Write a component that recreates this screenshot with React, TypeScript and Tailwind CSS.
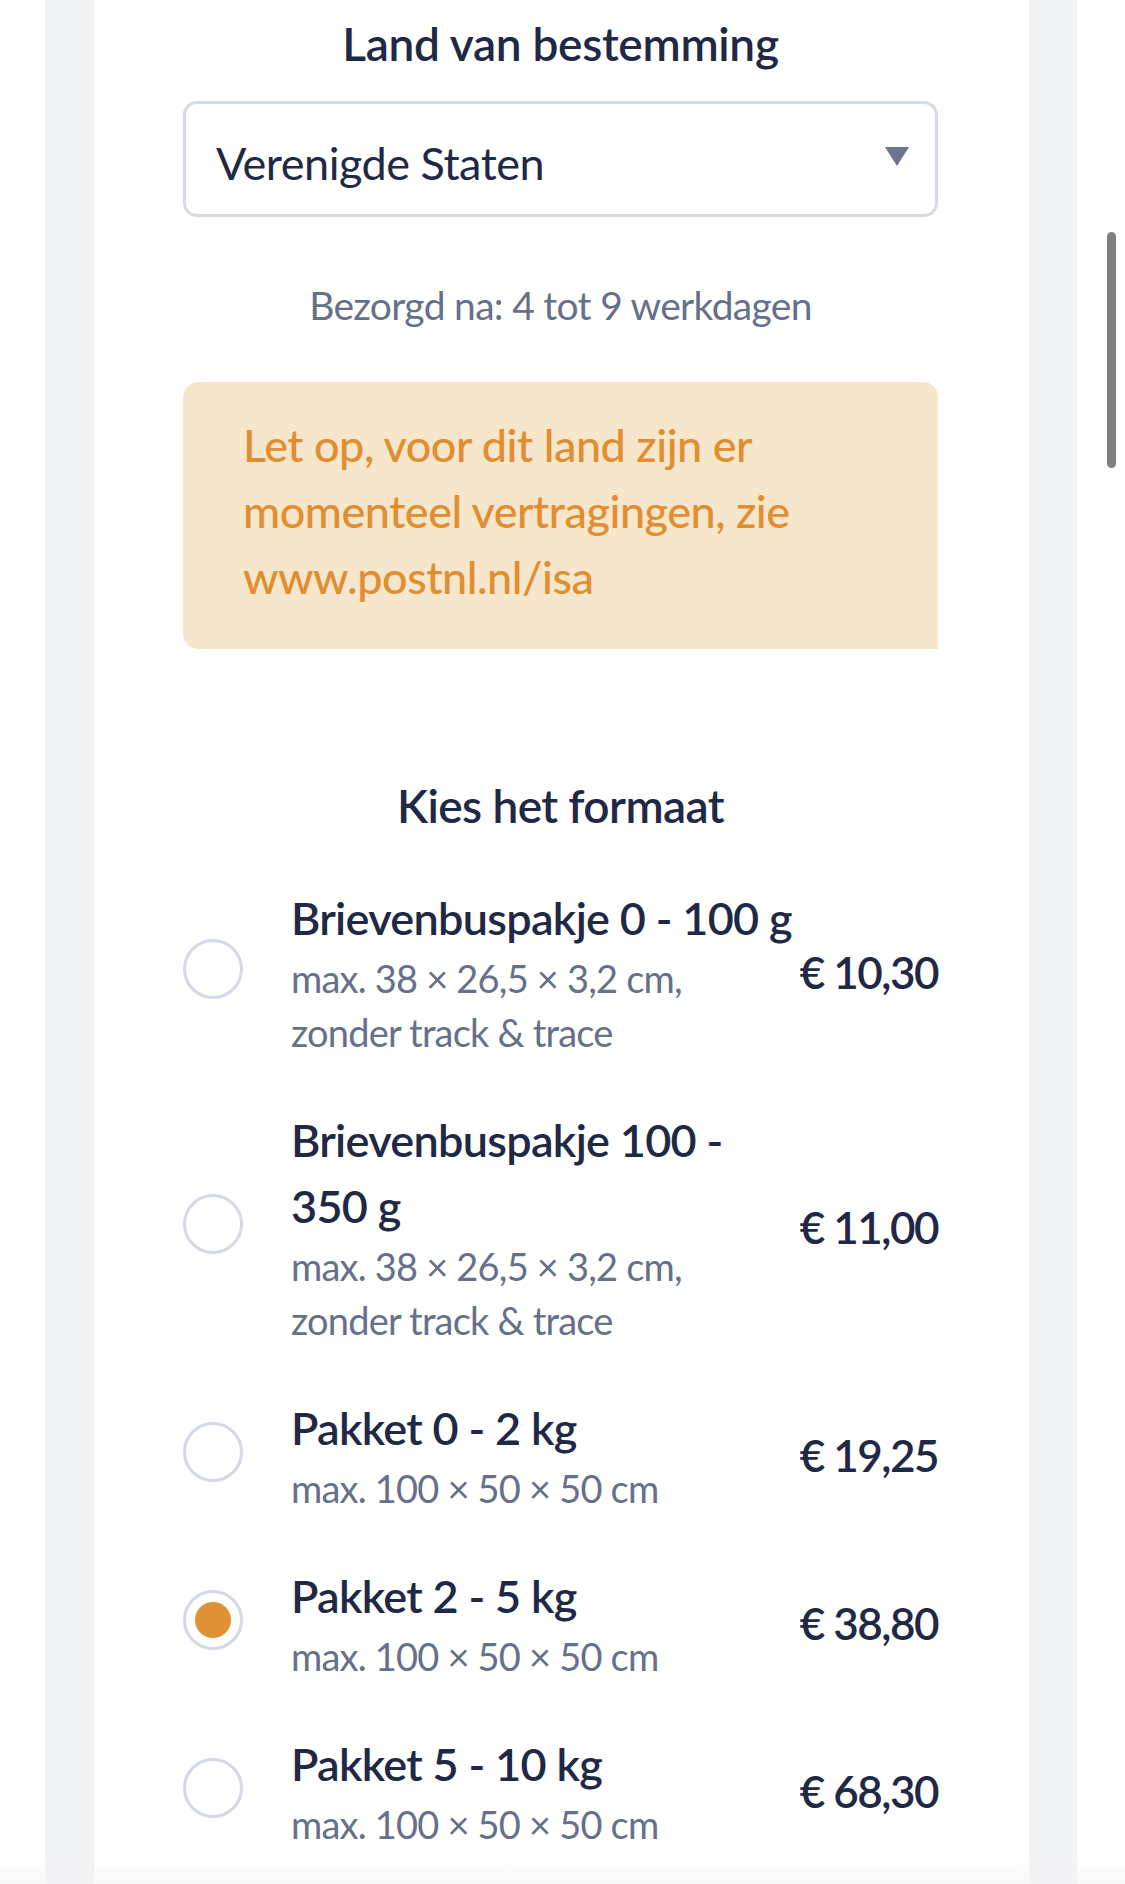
import React from "react";

type Option = {
  title: string[];
  sub: string[];
  price: string;
  selected?: boolean;
};

const options: Option[] = [
  {
    title: ["Brievenbuspakje 0 - 100 g"],
    sub: ["max. 38 × 26,5 × 3,2 cm,", "zonder track & trace"],
    price: "€ 10,30",
  },
  {
    title: ["Brievenbuspakje 100 -", "350 g"],
    sub: ["max. 38 × 26,5 × 3,2 cm,", "zonder track & trace"],
    price: "€ 11,00",
  },
  {
    title: ["Pakket 0 - 2 kg"],
    sub: ["max. 100 × 50 × 50 cm"],
    price: "€ 19,25",
  },
  {
    title: ["Pakket 2 - 5 kg"],
    sub: ["max. 100 × 50 × 50 cm"],
    price: "€ 38,80",
    selected: true,
  },
  {
    title: ["Pakket 5 - 10 kg"],
    sub: ["max. 100 × 50 × 50 cm"],
    price: "€ 68,30",
  },
];

function Radio({ selected }: { selected?: boolean }) {
  return (
    <div className="w-[60px] h-[60px] shrink-0 rounded-full border-[3px] border-[#d4d9e5] flex items-center justify-center mb-[6px]">
      {selected && <div className="w-[36px] h-[36px] rounded-full bg-[#e09035]" />}
    </div>
  );
}

export default function App() {
  return (
    <div className="relative w-[1125px] h-[1884px] overflow-hidden bg-white font-['Lato','Noto_Sans',sans-serif]">
      <div className="ml-[45px] w-[1032px] h-full bg-[#f2f3f5] pl-[49px] pr-[48px]">
        <div className="h-full bg-white pt-[11px] pl-[89px] pr-[91px]">
          <h1 className="text-[46px] leading-[66px] font-semibold tracking-[-0.3px] text-[#1f2945] text-center">
            Land van bestemming
          </h1>

          <div className="mt-[24px] h-[116px] border-[3px] border-[#d5dae5] rounded-[14px] flex items-center justify-between pl-[30px] pr-[26px]">
            <span className="text-[45px] leading-[54px] tracking-[-0.5px] text-[#1f2945] pt-[8px]">Verenigde Staten</span>
            <svg width="24" height="19" viewBox="0 0 24 19" className="mb-[6px]">
              <polygon points="0,0 24,0 12,19" fill="#6b7490" />
            </svg>
          </div>

          <p className="mt-[61px] text-[39px] leading-[54px] tracking-[-0.7px] text-[#667089] text-center">
            Bezorgd na: 4 tot 9 werkdagen
          </p>

          <div className="mt-[50px] bg-[#f6e6cc] rounded-tl-[15px] rounded-tr-[15px] rounded-bl-[15px] pl-[60px] pr-[60px] pt-[30px] pb-[39px]">
            <p className="text-[45px] leading-[66px] font-medium tracking-[-0.5px] text-[#e08e2f]">
              Let op, voor dit land zijn er momenteel vertragingen, zie www.postnl.nl/isa
            </p>
          </div>

          <h2 className="mt-[124px] text-[46px] leading-[66px] font-semibold tracking-[-0.6px] text-[#1f2945] text-center">
            Kies het formaat
          </h2>

          <div className="mt-[46px] flex flex-col gap-[48px]">
            {options.map((o, i) => (
              <div key={i} className="flex items-center">
                <Radio selected={o.selected} />
                <div className="ml-[48px] flex-1 min-w-0">
                  <div className="text-[45px] leading-[66px] font-semibold tracking-[-0.7px] text-[#1f2945]">
                    {o.title.map((t, j) => (
                      <div key={j} className="whitespace-nowrap">{t}</div>
                    ))}
                  </div>
                  <div className="text-[38px] leading-[54px] tracking-[-0.8px] text-[#667089]">
                    {o.sub.map((t, j) => (
                      <div key={j} className="whitespace-nowrap">{t}</div>
                    ))}
                  </div>
                </div>
                <div className="text-[44px] leading-[66px] font-semibold tracking-[-1.5px] text-[#1f2945] whitespace-nowrap">
                  {o.price}
                </div>
              </div>
            ))}
          </div>
        </div>
      </div>

      <div className="absolute left-[1107px] top-[232px] w-[9px] h-[236px] rounded-full bg-[#808080]" />
      <div className="absolute left-0 right-0 bottom-0 h-[26px] bg-gradient-to-b from-white/0 to-[#f3f3f5]/70" />
    </div>
  );
}
